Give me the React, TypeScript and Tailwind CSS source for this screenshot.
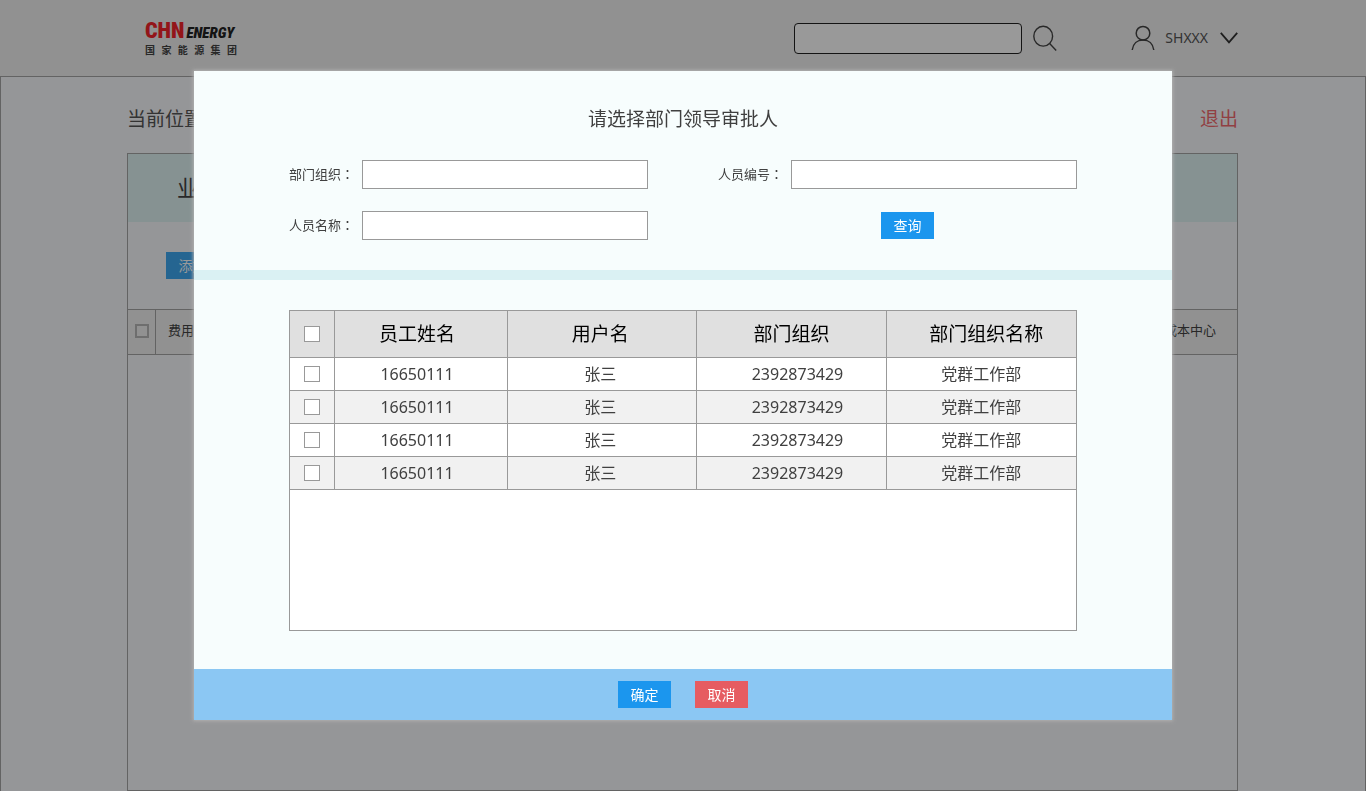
import { useState } from "react";
import type { ReactNode } from "react";

const employees = [
    { id: 1, name: "16650111", user: "张三", dept: "2392873429", deptName: "党群工作部" },
    { id: 2, name: "16650111", user: "张三", dept: "2392873429", deptName: "党群工作部" },
    { id: 3, name: "16650111", user: "张三", dept: "2392873429", deptName: "党群工作部" },
    { id: 4, name: "16650111", user: "张三", dept: "2392873429", deptName: "党群工作部" },
];

const checkboxClass = "block h-4 w-4 appearance-none border border-[#999999] bg-white checked:bg-[#1b96ee]";

const buttonColors = {
    primary: "bg-[#1b96ee]",
    light: "bg-[#3ea8f2]",
    danger: "bg-[#e65c61]",
};

function Logo() {
    return (
        <a href="#" className="block w-[92px]">
            <span className="flex items-baseline gap-0.5 font-['Roboto_Condensed','Liberation_Sans',sans-serif] leading-[22px] font-black whitespace-nowrap">
                <span className="text-[22px] text-[#f5242a]">CHN</span>
                <span className="text-[15px] italic text-[#222222]">ENERGY</span>
            </span>
            <span className="block text-[10px] leading-3 font-bold text-[#444444] [text-align-last:justify]">
                国家能源集团
            </span>
        </a>
    );
}

function Header() {
    return (
        <header className="flex h-[76px] items-center bg-[#f2f2f2] pr-32 pl-[145px]">
            <Logo />
            <input
                type="search"
                aria-label="搜索"
                className="ml-auto h-[31px] w-[228px] rounded border border-[#222222] bg-white px-2 text-sm"
            />
            <button type="button" aria-label="搜索" className="ml-[11px]">
                <svg width="24" height="26" viewBox="0 0 24 26" fill="none" stroke="#444" strokeWidth="1.4">
                    <ellipse cx="10.2" cy="11.2" rx="9.4" ry="9.9" />
                    <path d="M16.6 18.6 L23.2 25.4" />
                </svg>
            </button>
            <button type="button" className="ml-[74px] flex items-center text-sm text-[#555555]">
                <svg width="24" height="26" viewBox="0 0 24 26" fill="none" stroke="#444" strokeWidth="1.5">
                    <circle cx="12" cy="8.2" r="6.8" />
                    <path d="M1.2 25 C2 18.5 6.4 15 12 15 C17.6 15 22 18.5 22.8 25" />
                </svg>
                <span className="ml-2.5">SHXXX</span>
                <svg className="ml-3" width="18" height="12" viewBox="0 0 18 12" fill="none" stroke="#333" strokeWidth="1.8">
                    <path d="M0.8 0.8 L9 10.4 L17.2 0.8" />
                </svg>
            </button>
        </header>
    );
}

function Field({ id, label }: { id: string; label: string }) {
    return (
        <div className="flex items-center">
            <label htmlFor={id} className="w-[73px] shrink-0 text-[13px]">
                {label}
                <span className="font-['Noto_Sans_CJK_TC',sans-serif]">：</span>
            </label>
            <input id={id} type="text" className="h-[29px] min-w-0 flex-1 border border-[#999999] bg-white px-2 text-sm" />
        </div>
    );
}

function ActionButton({ children, color = "primary" }: { children: ReactNode; color?: keyof typeof buttonColors }) {
    return (
        <button type="button" className={`h-[27px] w-[53px] shrink-0 text-sm text-white ${buttonColors[color]}`}>
            {children}
        </button>
    );
}

function EmployeeTable() {
    const [selected, setSelected] = useState<number[]>([]);

    const toggle = (id: number) =>
        setSelected(selected.includes(id) ? selected.filter((s) => s !== id) : [...selected, id]);

    const toggleAll = () =>
        setSelected(selected.length === employees.length ? [] : employees.map((e) => e.id));

    const cell = "border-r border-b border-[#999999]";

    return (
        <div className="min-h-[321px] border border-[#999999] bg-white">
            <table className="w-full table-fixed border-separate border-spacing-0 text-center">
                <colgroup>
                    <col className="w-[45px]" />
                    <col className="w-[173px]" />
                    <col />
                    <col />
                    <col />
                </colgroup>
                <thead>
                    <tr className="h-[47px] bg-[#e0e0e0] text-[19px] text-black">
                        <th className={`${cell} pl-3.5`}>
                            <input
                                type="checkbox"
                                aria-label="全选"
                                className={checkboxClass}
                                checked={selected.length === employees.length}
                                onChange={toggleAll}
                            />
                        </th>
                        <th className={`${cell} pr-2 font-normal`}>员工姓名</th>
                        <th className={`${cell} pr-1 font-normal`}>用户名</th>
                        <th className={`${cell} font-normal`}>部门组织</th>
                        <th className="border-b border-[#999999] pl-2.5 font-normal">部门组织名称</th>
                    </tr>
                </thead>
                <tbody>
                    {employees.map((e) => (
                        <tr key={e.id} className="h-[33px] leading-6 even:bg-[#f1f1f1]">
                            <td className={`${cell} pl-3.5`}>
                                <input
                                    type="checkbox"
                                    aria-label={e.name}
                                    className={checkboxClass}
                                    checked={selected.includes(e.id)}
                                    onChange={() => toggle(e.id)}
                                />
                            </td>
                            <td className={`${cell} pr-2`}>{e.name}</td>
                            <td className={`${cell} pr-1`}>{e.user}</td>
                            <td className={`${cell} pl-3`}>{e.dept}</td>
                            <td className="border-b border-[#999999]">{e.deptName}</td>
                        </tr>
                    ))}
                </tbody>
            </table>
        </div>
    );
}

function ApproverDialog() {
    return (
        <div className="fixed inset-0 flex items-start justify-center overflow-auto bg-black/40 pt-[71px]">
            <div
                role="dialog"
                aria-labelledby="dialog-title"
                className="w-full max-w-[978px] bg-[#f7fdfd] text-[#404040] shadow-[0_0_3px_1px_#b0b0b0]"
            >
                {/* 查询条件 */}
                <div className="border-b-10 border-[#daf1f3] px-[95px] pt-[34px] pb-[30px]">
                    <h2 id="dialog-title" className="text-center text-[19px] leading-7">
                        请选择部门领导审批人
                    </h2>
                    <form className="mt-[27px] grid grid-cols-2 gap-x-[70px] gap-y-[22px]">
                        <Field id="dept" label="部门组织" />
                        <Field id="code" label="人员编号" />
                        <Field id="name" label="人员名称" />
                        <div className="flex items-center pl-[163px]">
                            <ActionButton>查询</ActionButton>
                        </div>
                    </form>
                </div>

                {/* 人员列表 */}
                <div className="px-[95px] pt-[30px] pb-[38px]">
                    <EmployeeTable />
                </div>

                <div className="flex h-[51px] items-center justify-center gap-6 bg-[#8bc7f3]">
                    <ActionButton>确定</ActionButton>
                    <ActionButton color="danger">取消</ActionButton>
                </div>
            </div>
        </div>
    );
}

export default function App() {
    return (
        <div className="flex min-h-screen flex-col font-['Noto_Sans','Noto_Sans_CJK_SC',sans-serif]">
            <Header />
            <main className="flex flex-1 flex-col border border-b-0 border-[#a6a6a6] bg-[#f9fafd] pr-[127px] pl-[126px]">
                <div className="flex h-[76px] items-center justify-between pb-1 pt-3 text-[19px] text-[#555555]">
                    <span>当前位置</span>
                    <a href="#" className="text-[#f26a6f]">
                        退出
                    </a>
                </div>
                <section className="flex-1 border border-[#a6a6a6]">
                    <h1 className="h-[68px] bg-[#dff3f4] pl-[49px] text-[22px] leading-[66px] text-[#444444]">业务</h1>
                    <div className="px-[38px] py-[30px]">
                        <ActionButton color="light">添加</ActionButton>
                    </div>
                    <table className="w-full table-fixed border-separate border-spacing-0 border-y border-[#a6a6a6] bg-[#f2f2f2] text-[13px] text-[#444444]">
                        <thead>
                            <tr className="h-11">
                                <th className="w-7 border-r border-[#a6a6a6] pb-0.5 pl-[7px]">
                                    <input
                                        type="checkbox"
                                        aria-label="全选"
                                        className="block h-3.5 w-3.5 appearance-none border-2 border-[#b8b8b8]"
                                    />
                                </th>
                                <th className="pb-0.5 pl-3 text-left font-normal">费用项</th>
                                <th className="pr-[21px] pb-0.5 text-right font-normal">成本中心</th>
                            </tr>
                        </thead>
                    </table>
                </section>
            </main>
            <ApproverDialog />
        </div>
    );
}
